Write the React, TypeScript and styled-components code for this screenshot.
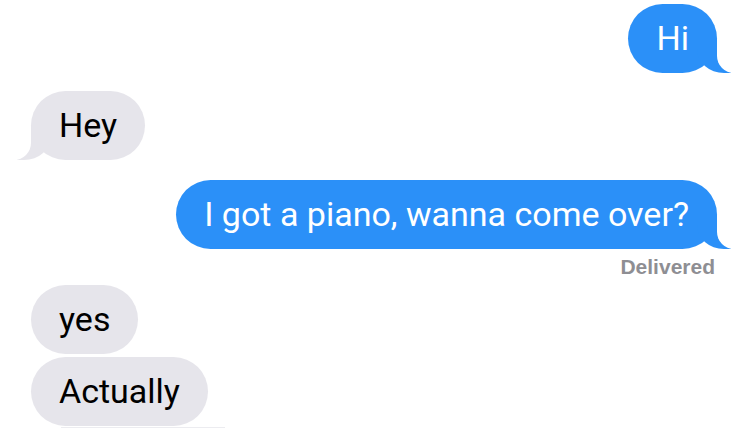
import styled, { createGlobalStyle, css } from 'styled-components';

type Side = 'me' | 'them';

const messages: { id: number; side: Side; text: string; tail: boolean; gap: number; status?: string }[] = [
  { id: 1, side: 'me', text: 'Hi', tail: true, gap: 4 },
  { id: 2, side: 'them', text: 'Hey', tail: true, gap: 18 },
  { id: 3, side: 'me', text: 'I got a piano, wanna come over?', tail: true, gap: 20, status: 'Delivered' },
  { id: 4, side: 'them', text: 'yes', tail: false, gap: 8 },
  { id: 5, side: 'them', text: 'Actually', tail: false, gap: 3 },
];

const colors = {
  blue: '#2b90f8',
  gray: '#e6e5eb',
  status: '#8e8e93',
};

function App() {
  return (
    <>
      <GlobalStyle />
      <Thread>
        {messages.map((m) => (
          <Group key={m.id} $gap={m.gap} $side={m.side}>
            <Bubble $side={m.side} $tail={m.tail}>
              {m.text}
            </Bubble>
            {m.status && <Status>{m.status}</Status>}
          </Group>
        ))}
        <NextEdge />
      </Thread>
    </>
  );
}

const GlobalStyle = createGlobalStyle`
  html, body {
    margin: 0;
    padding: 0;
    background: #ffffff;
  }
  body {
    font-family: Roboto, "Liberation Sans", sans-serif;
    -webkit-font-smoothing: antialiased;
  }
`;

const Thread = styled.div`
  width: 750px;
  height: 430px;
  overflow: hidden;
  display: flex;
  flex-direction: column;
  box-sizing: border-box;
  padding: 0 33px 0 31px;
`;

const Group = styled.div<{ $gap: number; $side: Side }>`
  display: flex;
  flex-direction: column;
  margin-top: ${({ $gap }) => $gap}px;
  align-items: ${({ $side }) => ($side === 'me' ? 'flex-end' : 'flex-start')};
`;

const tailMe = css`
  &::before {
    content: '';
    position: absolute;
    bottom: 0;
    right: -14px;
    width: 34px;
    height: 34px;
    background: ${colors.blue};
    border-bottom-left-radius: 27px 24px;
  }
  &::after {
    content: '';
    position: absolute;
    bottom: 0;
    right: -44px;
    width: 44px;
    height: 34px;
    background: #ffffff;
    border-bottom-left-radius: 17px;
  }
`;

const tailThem = css`
  &::before {
    content: '';
    position: absolute;
    bottom: 0;
    left: -14px;
    width: 34px;
    height: 34px;
    background: ${colors.gray};
    border-bottom-right-radius: 27px 24px;
  }
  &::after {
    content: '';
    position: absolute;
    bottom: 0;
    left: -44px;
    width: 44px;
    height: 34px;
    background: #ffffff;
    border-bottom-right-radius: 17px;
  }
`;

const Bubble = styled.div<{ $side: Side; $tail: boolean }>`
  position: relative;
  padding: 15px 28px;
  border-radius: 35px;
  font-size: 34px;
  line-height: 39px;
  white-space: nowrap;
  ${({ $side }) =>
    $side === 'me'
      ? css`
          background: ${colors.blue};
          color: #ffffff;
        `
      : css`
          background: ${colors.gray};
          color: #000000;
        `}
  ${({ $side, $tail }) => $tail && ($side === 'me' ? tailMe : tailThem)}
`;

const Status = styled.span`
  margin-top: 8px;
  margin-right: 2px;
  font-family: "Liberation Sans", Arial, sans-serif;
  font-size: 21px;
  line-height: 20px;
  font-weight: 700;
  color: ${colors.status};
`;

const NextEdge = styled.div`
  margin: 1px 0 0 30px;
  width: 164px;
  height: 1px;
  background: #ececf0;
`;

export default App;
